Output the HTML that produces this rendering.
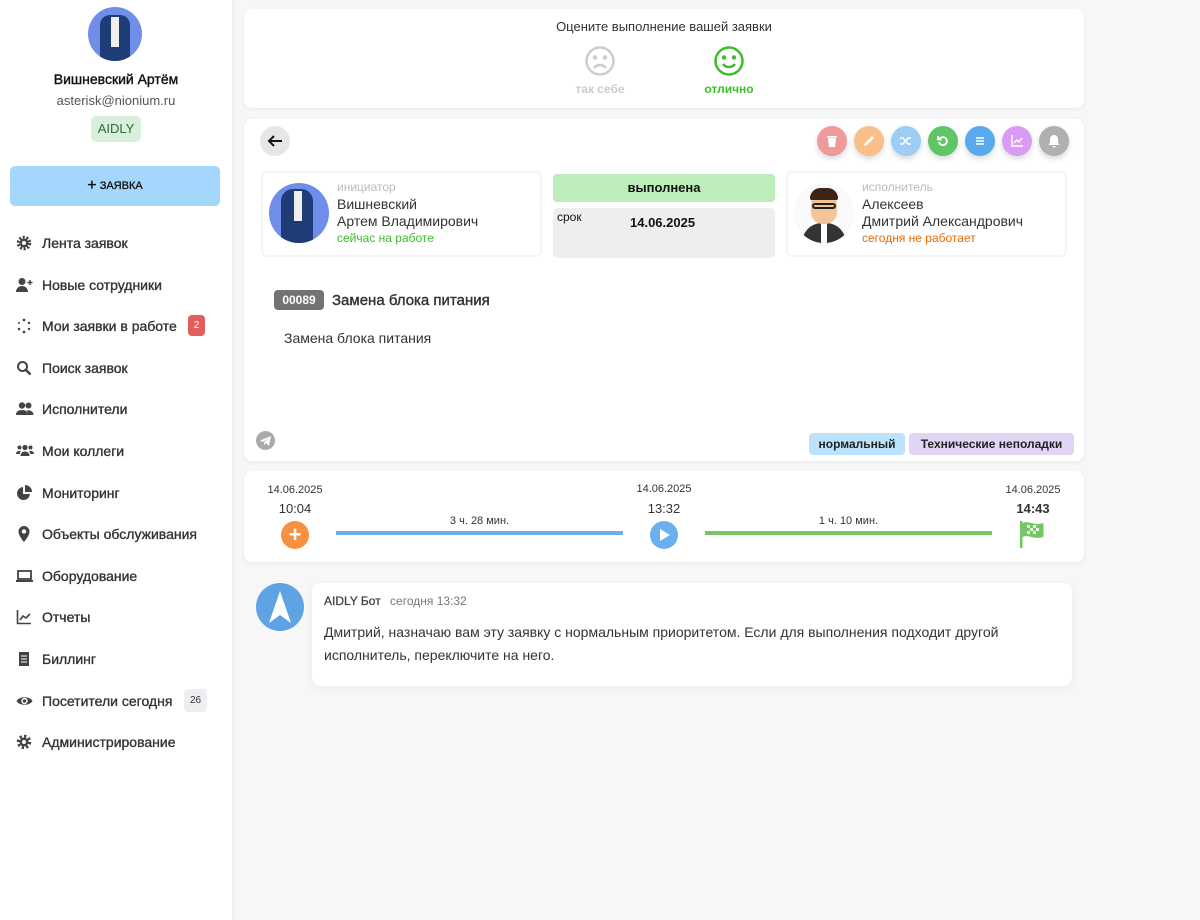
<!DOCTYPE html>
<html><head><meta charset="utf-8"><style>
*{box-sizing:border-box;margin:0;padding:0}
body{width:1200px;height:920px;background:#f7f7f7;font-family:"Liberation Sans",sans-serif;color:#333;position:relative;overflow:hidden}
.a{position:absolute}
.side{left:0;top:0;width:232px;height:920px;background:#fff;box-shadow:1px 0 4px rgba(0,0,0,.06)}
.item{position:absolute;left:16px;font-size:14px;color:#333;height:20px;line-height:20px;-webkit-text-stroke:0.35px #333}
.item svg{position:absolute;left:0;top:2px}
.item span{position:absolute;left:26px;white-space:nowrap}
.card{background:#fff;border-radius:8px;box-shadow:0 1px 4px rgba(0,0,0,.06)}
.btn{position:absolute;top:126px;width:30px;height:30px;border-radius:50%;box-shadow:0 3px 6px rgba(0,0,0,.15)}
.btn svg{position:absolute;left:8px;top:8px}
.sm{font-size:11px;color:#333}
</style></head><body>
<div class="a side">
 <div class="a" style="left:88px;top:7px;width:54px;height:54px;border-radius:50%;background:#6f8ee8;overflow:hidden">
  <div class="a" style="left:12px;top:8px;width:30px;height:50px;background:#1e3c78;border-radius:10px 10px 0 0"></div>
  <div class="a" style="left:23px;top:10px;width:8px;height:30px;background:#eee"></div>
 </div>
 <div class="a" style="left:0;width:232px;top:71px;text-align:center;font-size:14px;color:#111;-webkit-text-stroke:0.4px #111">Вишневский Артём</div>
 <div class="a" style="left:0;width:232px;top:93px;text-align:center;font-size:13px;color:#555">asterisk@nionium.ru</div>
 <div class="a" style="left:91px;top:116px;width:50px;height:26px;border-radius:5px;background:#d8efdc;color:#2c6e3a;font-size:13px;text-align:center;line-height:26px">AIDLY</div>
 <div class="a" style="left:10px;top:166px;width:210px;height:40px;border-radius:5px;background:#a5d6fb;text-align:center;line-height:40px;font-size:11px;color:#111;-webkit-text-stroke:0.3px #111"><span style="font-size:16px;vertical-align:-1px">+</span> ЗАЯВКА</div>

 <div class="item" style="top:233px"><svg width="16" height="16" viewBox="0 0 16 16"><circle cx="8" cy="8" r="5.5" fill="none" stroke="#444" stroke-width="3.5" stroke-dasharray="2 1.5"/><circle cx="8" cy="8" r="4.5" fill="#444"/><circle cx="8" cy="8" r="2" fill="#fff"/></svg><span>Лента заявок</span></div>
 <div class="item" style="top:275px"><svg width="18" height="16" viewBox="0 0 18 16"><circle cx="6" cy="4.5" r="3.5" fill="#444"/><path d="M0 15c0-4 3-6 6-6s6 2 6 6z" fill="#444"/><path d="M14 3v5M11.5 5.5h5" stroke="#444" stroke-width="1.5"/></svg><span>Новые сотрудники</span></div>
 <div class="item" style="top:316px"><svg width="16" height="16" viewBox="0 0 16 16" fill="#444"><circle cx="8" cy="2" r="1.4"/><circle cx="13" cy="5" r="1.2"/><circle cx="13" cy="11" r="1.2"/><circle cx="8" cy="14" r="1.4"/><circle cx="3" cy="11" r="1.3"/><circle cx="3" cy="5" r="1"/></svg><span>Мои заявки в работе</span><span style="left:172px;top:-1px;width:17px;height:21px;border-radius:4px;background:#e35d5d;color:#fff;font-size:10px;text-align:center;line-height:21px;-webkit-text-stroke:0">2</span></div>
 <div class="item" style="top:358px"><svg width="16" height="16" viewBox="0 0 16 16"><circle cx="6.5" cy="6.5" r="4.5" fill="none" stroke="#444" stroke-width="2"/><path d="M10 10l4.5 4.5" stroke="#444" stroke-width="2.5"/></svg><span>Поиск заявок</span></div>
 <div class="item" style="top:399px"><svg width="18" height="16" viewBox="0 0 18 16" fill="#444"><circle cx="6" cy="4.5" r="3.2"/><circle cx="12.5" cy="4.5" r="3"/><path d="M0 14c0-3.5 2.5-5 6-5s6 1.5 6 5z M12 14c0-2 -.5-3.5-1.5-4.5 3.5-.5 7 .5 7 4.5z"/></svg><span>Исполнители</span></div>
 <div class="item" style="top:441px"><svg width="18" height="16" viewBox="0 0 18 16" fill="#444"><circle cx="9" cy="4.5" r="2.6"/><circle cx="3.5" cy="4.5" r="2"/><circle cx="14.5" cy="4.5" r="2"/><path d="M4.5 13c0-3 2-4.5 4.5-4.5s4.5 1.5 4.5 4.5zM0 11c0-2 1.3-3 3.5-3 1 0 1.5.3 1.5.3-1 1-1.2 2-1.2 2.7zM18 11c0-2-1.3-3-3.5-3-1 0-1.5.3-1.5.3 1 1 1.2 2 1.2 2.7z"/></svg><span>Мои коллеги</span></div>
 <div class="item" style="top:483px"><svg width="16" height="16" viewBox="0 0 16 16" fill="#444"><path d="M7 2a6.5 6.5 0 1 0 7 7H7z"/><path d="M9 0v7h7A7 7 0 0 0 9 0z"/></svg><span>Мониторинг</span></div>
 <div class="item" style="top:524px"><svg width="16" height="16" viewBox="0 0 16 16" fill="#444"><path d="M8 0a5.5 5.5 0 0 0-5.5 5.5C2.5 10 8 16 8 16s5.5-6 5.5-10.5A5.5 5.5 0 0 0 8 0zm0 3.3a2.2 2.2 0 1 1 0 4.4 2.2 2.2 0 0 1 0-4.4z"/></svg><span>Объекты обслуживания</span></div>
 <div class="item" style="top:566px"><svg width="17" height="16" viewBox="0 0 17 16"><rect x="2" y="3" width="13" height="8" fill="none" stroke="#444" stroke-width="1.8"/><rect x="0" y="12" width="17" height="2" fill="#444"/></svg><span>Оборудование</span></div>
 <div class="item" style="top:607px"><svg width="16" height="16" viewBox="0 0 16 16" fill="none" stroke="#444" stroke-width="1.6"><path d="M1.5 1v13.5H15"/><path d="M4 11l3-4 3 2 4-4"/></svg><span>Отчеты</span></div>
 <div class="item" style="top:649px"><svg width="16" height="16" viewBox="0 0 16 16"><rect x="3" y="1" width="10" height="14" fill="#444"/><path d="M5 5h6M5 8h6M5 11h6" stroke="#fff" stroke-width="1"/></svg><span>Биллинг</span></div>
 <div class="item" style="top:691px"><svg width="17" height="16" viewBox="0 0 17 16"><path d="M0.5 8C3 3 14 3 16.5 8 14 13 3 13 .5 8z" fill="#444"/><circle cx="8.5" cy="8" r="3.2" fill="#fff"/><circle cx="8.5" cy="8" r="1.8" fill="#444"/></svg><span>Посетители сегодня</span><span style="left:168px;top:-2px;width:23px;height:23px;border-radius:4px;background:#eceef1;color:#333;font-size:10px;text-align:center;line-height:23px;-webkit-text-stroke:0">26</span></div>
 <div class="item" style="top:732px"><svg width="16" height="16" viewBox="0 0 16 16"><circle cx="8" cy="8" r="5.5" fill="none" stroke="#444" stroke-width="3.5" stroke-dasharray="2.2 2.1"/><circle cx="8" cy="8" r="4.5" fill="#444"/><circle cx="8" cy="8" r="2" fill="#fff"/></svg><span>Администрирование</span></div>
</div>

<!-- rating -->
<div class="a card" style="left:244px;top:9px;width:840px;height:99px">
 <div class="a" style="left:0;width:840px;top:10px;text-align:center;font-size:13px;color:#333">Оцените выполнение вашей заявки</div>
 <svg class="a" style="left:340px;top:36px" width="32" height="32" viewBox="0 0 32 32" fill="none" stroke="#ccc" stroke-width="2.5"><circle cx="16" cy="16" r="13.5"/><circle cx="11" cy="12.5" r="1" fill="#ccc"/><circle cx="21" cy="12.5" r="1" fill="#ccc"/><path d="M10 23c3-4 9-4 12 0"/></svg>
 <div class="a" style="left:316px;width:80px;top:73px;text-align:center;font-size:12px;font-weight:bold;color:#ccc">так себе</div>
 <svg class="a" style="left:469px;top:36px" width="32" height="32" viewBox="0 0 32 32" fill="none" stroke="#3cbd2a" stroke-width="2.5"><circle cx="16" cy="16" r="13.5"/><circle cx="11" cy="12.5" r="1" fill="#3cbd2a"/><circle cx="21" cy="12.5" r="1" fill="#3cbd2a"/><path d="M10 19c3 4 9 4 12 0"/></svg>
 <div class="a" style="left:445px;width:80px;top:73px;text-align:center;font-size:12px;font-weight:bold;color:#3cbd2a">отлично</div>
</div>

<!-- main card -->
<div class="a card" style="left:244px;top:119px;width:840px;height:342px"></div>
<div class="a" style="left:260px;top:126px;width:30px;height:30px;border-radius:50%;background:#e6e6e6"><svg class="a" style="left:7px;top:7px" width="16" height="16" viewBox="0 0 16 16" fill="none" stroke="#111" stroke-width="2"><path d="M15 8H2M7 3L2 8l5 5"/></svg></div>
<div class="btn" style="left:817px;background:#ef9a9a"><svg width="14" height="14" viewBox="0 0 14 14" fill="#fff"><rect x="2" y="2" width="10" height="1.5"/><path d="M3 4h8l-1 9H4z"/></svg></div>
<div class="btn" style="left:854px;background:#f8c088"><svg width="14" height="14" viewBox="0 0 14 14" fill="#fff"><path d="M2 12l1-3 7-7 2 2-7 7z"/></svg></div>
<div class="btn" style="left:891px;background:#9dcdf5"><svg width="14" height="14" viewBox="0 0 14 14" fill="none" stroke="#fff" stroke-width="1.6"><path d="M1 4h3l5 6h3M1 10h3l5-6h3"/></svg></div>
<div class="btn" style="left:928px;background:#5fc567"><svg width="14" height="14" viewBox="0 0 14 14" fill="none" stroke="#fff" stroke-width="1.8"><path d="M3.5 5A4 4 0 1 1 3 8"/><path d="M2 2v3.5h3.5"/></svg></div>
<div class="btn" style="left:965px;background:#5aa9ec"><svg width="14" height="14" viewBox="0 0 14 14" stroke="#fff" stroke-width="1.6"><path d="M3 4h8M3 7h8M3 10h8"/></svg></div>
<div class="btn" style="left:1002px;background:#d99bf3"><svg width="14" height="14" viewBox="0 0 14 14" fill="none" stroke="#fff" stroke-width="1.4"><path d="M2 1v11h11M4 9l3-3 2 2 3-4"/></svg></div>
<div class="btn" style="left:1039px;background:#b0b0b0"><svg width="14" height="14" viewBox="0 0 14 14" fill="#fff"><path d="M7 1a4 4 0 0 0-4 4v4l-1.5 2h11L11 9V5a4 4 0 0 0-4-4zM5.5 12h3a1.5 1.5 0 0 1-3 0z"/></svg></div>

<div class="a" style="left:261px;top:171px;width:281px;height:86px;border:2px solid #f5f5f5;border-radius:6px"></div>
<div class="a" style="left:269px;top:183px;width:60px;height:60px;border-radius:50%;background:#6f8ee8;overflow:hidden"><div class="a" style="left:12px;top:6px;width:32px;height:58px;background:#1e3c78;border-radius:12px 12px 0 0"></div><div class="a" style="left:25px;top:8px;width:8px;height:30px;background:#eee"></div></div>
<div class="a" style="left:337px;top:180px;font-size:12px;color:#bbb">инициатор</div>
<div class="a" style="left:337px;top:196px;font-size:14px;color:#333;line-height:17px">Вишневский<br>Артем Владимирович</div>
<div class="a" style="left:337px;top:231px;font-size:12px;color:#3cbd2a">сейчас на работе</div>

<div class="a" style="left:553px;top:174px;width:222px;height:28px;background:#bdeeb9;border-radius:4px;text-align:center;line-height:28px;font-size:13px;font-weight:bold;color:#111">выполнена</div>
<div class="a" style="left:553px;top:208px;width:222px;height:50px;background:#eee;border-radius:5px"><div class="a" style="left:4px;top:2px;font-size:12px;color:#111">срок</div><div class="a" style="left:77px;top:7px;font-size:13px;font-weight:bold;color:#111">14.06.2025</div></div>

<div class="a" style="left:786px;top:171px;width:281px;height:86px;border:2px solid #f5f5f5;border-radius:6px"></div>
<div class="a" style="left:794px;top:183px;width:60px;height:60px;border-radius:50%;background:#fafafa;overflow:hidden">
 <div class="a" style="left:8px;top:40px;width:44px;height:30px;background:#333;border-radius:20px 20px 0 0"></div>
 <div class="a" style="left:27px;top:40px;width:6px;height:20px;background:#fff"></div>
 <div class="a" style="left:17px;top:9px;width:26px;height:32px;background:#f2c496;border-radius:12px"></div>
 <div class="a" style="left:16px;top:5px;width:28px;height:12px;background:#3b2418;border-radius:12px 12px 2px 2px"></div>
 <div class="a" style="left:18px;top:20px;width:24px;height:6px;border:2px solid #222;border-radius:3px"></div>
</div>
<div class="a" style="left:862px;top:180px;font-size:12px;color:#bbb">исполнитель</div>
<div class="a" style="left:862px;top:196px;font-size:14px;color:#333;line-height:17px">Алексеев<br>Дмитрий Александрович</div>
<div class="a" style="left:862px;top:231px;font-size:12px;color:#f06a00">сегодня не работает</div>

<div class="a" style="left:274px;top:290px;width:50px;height:20px;background:#737373;border-radius:4px;color:#fff;font-size:12px;font-weight:bold;text-align:center;line-height:20px">00089</div>
<div class="a" style="left:332px;top:292px;font-size:15px;color:#333;-webkit-text-stroke:0.4px #333">Замена блока питания</div>
<div class="a" style="left:284px;top:330px;font-size:14px;color:#333">Замена блока питания</div>
<div class="a" style="left:256px;top:431px;width:19px;height:19px;border-radius:50%;background:#aaa"><svg class="a" style="left:4px;top:5px" width="11" height="10" viewBox="0 0 11 10" fill="#fff"><path d="M0 4.5L11 0 9 10 6 7 4 9V6.5L9 2 3 6z"/></svg></div>
<div class="a" style="left:809px;top:433px;width:96px;height:22px;background:#bde2fd;border-radius:4px;font-size:12px;font-weight:bold;text-align:center;line-height:22px;color:#222">нормальный</div>
<div class="a" style="left:909px;top:433px;width:165px;height:22px;background:#e1d4f4;border-radius:4px;font-size:12px;font-weight:bold;text-align:center;line-height:22px;color:#222">Технические неполадки</div>

<!-- timeline -->
<div class="a card" style="left:244px;top:471px;width:840px;height:91px"></div>
<div class="a sm" style="left:255px;width:80px;top:484px;text-align:center">14.06.2025</div>
<div class="a" style="left:255px;width:80px;top:501px;text-align:center;font-size:13px">10:04</div>
<div class="a" style="left:281px;top:521px;width:28px;height:28px;border-radius:50%;background:#f8913f;color:#fff;font-size:22px;font-weight:bold;text-align:center;line-height:28px">+</div>
<div class="a" style="left:336px;top:531px;width:287px;height:4px;background:#70ace9"></div>
<div class="a sm" style="left:336px;width:287px;top:515px;text-align:center">3 ч. 28 мин.</div>
<div class="a sm" style="left:624px;width:80px;top:483px;text-align:center">14.06.2025</div>
<div class="a" style="left:624px;width:80px;top:501px;text-align:center;font-size:13px">13:32</div>
<div class="a" style="left:650px;top:521px;width:28px;height:28px;border-radius:50%;background:#6ab0ec"><svg class="a" style="left:9px;top:7px" width="12" height="14" viewBox="0 0 12 14" fill="#fff"><path d="M1 1l10 6-10 6z"/></svg></div>
<div class="a" style="left:705px;top:531px;width:287px;height:4px;background:#75c765"></div>
<div class="a sm" style="left:705px;width:287px;top:515px;text-align:center">1 ч. 10 мин.</div>
<div class="a sm" style="left:993px;width:80px;top:484px;text-align:center">14.06.2025</div>
<div class="a" style="left:993px;width:80px;top:501px;text-align:center;font-size:13px;font-weight:bold">14:43</div>
<svg class="a" style="left:1019px;top:520px" width="28" height="28" viewBox="0 0 28 28"><rect x="1" y="1" width="2.5" height="27" fill="#75c765"/><path d="M3.5 3c6-3 10 3 21 0v14c-11 3-15-3-21 0z" fill="#75c765"/><path d="M8 5h3v3H8zM14 5h3v3h-3zM11 8h3v3h-3zM17 8h3v3h-3zM8 11h3v3H8zM14 11h3v3h-3z" fill="#fff" opacity=".8"/></svg>

<!-- comment -->
<div class="a" style="left:256px;top:583px;width:48px;height:48px;border-radius:50%;background:#5ea4e4"><svg class="a" style="left:0;top:0" width="48" height="48" viewBox="0 0 48 48"><path d="M24 8L13 40l11-8 11 8z" fill="#fff"/></svg></div>
<div class="a card" style="left:312px;top:583px;width:760px;height:103px;box-shadow:0 2px 8px rgba(0,0,0,.06)">
 <div class="a" style="left:12px;top:11px;font-size:12px;color:#444;-webkit-text-stroke:0.3px #444">AIDLY Бот <span style="color:#777;margin-left:6px;-webkit-text-stroke:0">сегодня 13:32</span></div>
 <div class="a" style="left:12px;top:38px;width:720px;font-size:14px;line-height:23px;color:#333">Дмитрий, назначаю вам эту заявку с нормальным приоритетом. Если для выполнения подходит другой исполнитель, переключите на него.</div>
</div>
</body></html>
